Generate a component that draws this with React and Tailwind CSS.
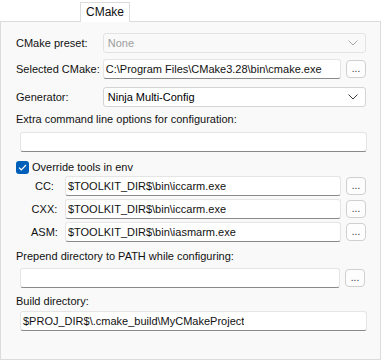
import React, { useState } from "react";

function Chevron({ muted }) {
  return (
    <svg width="10" height="6" viewBox="0 0 10 6" className="shrink-0">
      <path
        d="M0.5 0.5 L5 5 L9.5 0.5"
        fill="none"
        stroke={muted ? "#a8a8a8" : "#3c3c3c"}
        strokeWidth="1"
      />
    </svg>
  );
}

function Select({ value, disabled }) {
  return (
    <div
      className={`flex h-[20px] w-[264px] items-center justify-between rounded-[3px] border pl-[4px] pr-[7px] ${
        disabled
          ? "border-[#e3e3e3] bg-[#f9f9f9] text-[#9d9d9d]"
          : "border-[#d4d4d4] bg-white text-black"
      }`}
    >
      <span>{value}</span>
      <Chevron muted={disabled} />
    </div>
  );
}

function Field({ value, className = "" }) {
  return (
    <div
      className={`flex h-[20px] items-center rounded-[3px] border border-[#e5e5e5] border-b-[#8a8a8a] bg-white px-[2px] ${className}`}
    >
      <span className="truncate">{value}</span>
    </div>
  );
}

function Browse() {
  return (
    <button className="ml-[5px] flex h-[18px] w-[20px] shrink-0 items-end justify-center rounded-[4px] border border-[#d0d0d0] bg-[#fdfdfd] pb-[3px] text-[10px] leading-none text-[#333]">
      ...
    </button>
  );
}

export default function App() {
  const [override, setOverride] = useState(true);

  return (
    <div
      className="h-[360px] w-[383px] whitespace-nowrap bg-white text-[11px] leading-[16px] text-[#111]"
      style={{ fontFamily: '"Liberation Sans", Arial, sans-serif' }}
    >
      <div className="flex h-[21px] items-end">
        <div className="relative z-10 ml-[80px] flex h-[20px] w-[50px] -mb-px items-center justify-center border border-b-0 border-[#dcdcdc] bg-white pb-px text-[12px]">
          CMake
        </div>
      </div>

      <div className="h-[339px] w-[381px] border border-[#dcdcdc] bg-[#f9f9f9] pl-[15px] pr-[14px] pt-[11px]">
        <div className="flex h-[20px] items-center">
          <span className="w-[87px]">CMake preset:</span>
          <Select value="None" disabled />
        </div>

        <div className="mt-[6px] flex h-[20px] items-center">
          <span className="w-[87px]">Selected CMake:</span>
          <Field
            value="C:\Program Files\CMake3.28\bin\cmake.exe"
            className="w-[239px]"
          />
          <Browse />
        </div>

        <div className="mt-[8px] flex h-[20px] items-center">
          <span className="w-[87px]">Generator:</span>
          <Select value="Ninja Multi-Config" />
        </div>

        <div className="mt-[4px] h-[16px]">
          Extra command line options for configuration:
        </div>
        <Field value="" className="ml-[4px] mt-[5px] h-[19px] w-[347px]" />

        <label className="mt-[8px] flex h-[14px] items-center">
          <span
            onClick={() => setOverride(!override)}
            className={`flex h-[13px] w-[13px] items-center justify-center rounded-[3px] ${
              override ? "bg-[#005fb8]" : "border border-[#8a8a8a] bg-white"
            }`}
          >
            {override && (
              <svg width="9" height="7" viewBox="0 0 9 7">
                <path
                  d="M1 3.6 L3.3 5.8 L8 1"
                  fill="none"
                  stroke="white"
                  strokeWidth="1.2"
                />
              </svg>
            )}
          </span>
          <span className="ml-[3px]">Override tools in env</span>
        </label>

        {[
          ["CC:", "$TOOLKIT_DIR$\\bin\\iccarm.exe", "mt-[2px]"],
          ["CXX:", "$TOOLKIT_DIR$\\bin\\iccarm.exe", "mt-[3px]"],
          ["ASM:", "$TOOLKIT_DIR$\\bin\\iasmarm.exe", "mt-[3px]"],
        ].map(([name, path, gap]) => (
          <div key={name} className={`${gap} flex h-[20px] items-center`}>
            <span className="ml-[15px] w-[27px] text-center">{name}</span>
            <Field value={path} className="ml-[7px] w-[277px]" />
            <Browse />
          </div>
        ))}

        <div className="mt-[6px] h-[16px]">
          Prepend directory to PATH while configuring:
        </div>
        <div className="mt-[4px] flex h-[19px] items-center">
          <Field value="" className="ml-[4px] h-[19px] w-[320px]" />
          <Browse />
        </div>

        <div className="mt-[6px] h-[16px]">Build directory:</div>
        <Field
          value="$PROJ_DIR$\.cmake_build\MyCMakeProject"
          className="ml-[4px] mt-[2px] w-[347px]"
        />
      </div>
    </div>
  );
}
